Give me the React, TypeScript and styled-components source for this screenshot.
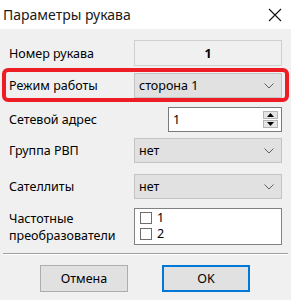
import React from 'react';
import styled, { createGlobalStyle } from 'styled-components';

const GlobalStyle = createGlobalStyle`
  html, body {
    margin: 0;
    padding: 0;
    background: #f0f0f0;
  }
  body {
    font-family: 'Noto Sans', 'Open Sans', sans-serif;
    color: #000;
  }
`;

const Window = styled.div`
  width: 291px;
  height: 300px;
  background: #f0f0f0;
  display: flex;
  flex-direction: column;
  overflow: hidden;
`;

const TitleBar = styled.div`
  height: 29px;
  background: #fff;
  display: flex;
  align-items: center;
  justify-content: space-between;
  padding: 0 9px 0 3px;
  font-size: 14px;
  color: #1a1a1a;
`;

const Body = styled.div`
  display: flex;
  flex-direction: column;
  padding: 11px 9px 0 9px;
`;

const Row = styled.div<{ $h: number; $mt: number }>`
  display: grid;
  grid-template-columns: 125px 1fr;
  align-items: center;
  height: ${(p) => p.$h}px;
  margin-top: ${(p) => p.$mt}px;
  position: relative;
`;

const Highlight = styled(Row)`
  &::before {
    content: '';
    position: absolute;
    left: -7px;
    right: -7px;
    top: -5px;
    bottom: -4px;
    border: 4px solid #ee1c25;
    border-radius: 6px;
    pointer-events: none;
  }
`;

const Label = styled.div`
  font-size: 12.5px;
  line-height: 17px;
`;

const ReadOnly = styled.div`
  height: 100%;
  box-sizing: border-box;
  border: 1px solid #d0d0d0;
  background: #f0f0f0;
  display: flex;
  align-items: center;
  justify-content: center;
  font-size: 12.5px;
  font-weight: bold;
`;

const Select = styled.div`
  height: 100%;
  box-sizing: border-box;
  border: 1px solid #c4c4c4;
  background: #e1e1e1;
  display: flex;
  align-items: center;
  justify-content: space-between;
  padding: 0 7px 0 4px;
  font-size: 12.5px;
`;

const Spin = styled.div`
  height: 100%;
  margin-left: 34px;
  box-sizing: border-box;
  border: 1px solid #7a7a7a;
  background: #fff;
  display: flex;
  align-items: center;
  justify-content: space-between;
  padding: 0 3px 0 4px;
  font-size: 12.5px;
`;

const SpinButtons = styled.div`
  display: flex;
  flex-direction: column;
  gap: 1px;
`;

const SpinButton = styled.div`
  width: 15px;
  height: 8px;
  background: #e5e5e5;
  border: 1px solid #b5b5b5;
  box-sizing: border-box;
  display: flex;
  align-items: center;
  justify-content: center;
`;

const ListBox = styled.div`
  height: 100%;
  box-sizing: border-box;
  border: 1px solid #828282;
  background: #fff;
  padding: 3px 0 0 5px;
  display: flex;
  flex-direction: column;
  gap: 4px;
`;

const CheckRow = styled.div`
  display: flex;
  align-items: center;
  gap: 5px;
  font-size: 12.5px;
  line-height: 12px;
`;

const CheckBox = styled.span`
  width: 12px;
  height: 12px;
  box-sizing: border-box;
  border: 1px solid #6d6d6d;
  background: #fff;
`;

const Separator = styled.div`
  margin: 8px 3px 0 3px;
  height: 1px;
  background: #a0a0a0;
  box-shadow: 0 1px 0 #fff;
`;

const Buttons = styled.div`
  display: flex;
  gap: 34px;
  padding: 11px 0 0 40px;
`;

const Button = styled.div<{ $primary?: boolean }>`
  width: 88px;
  height: 27px;
  box-sizing: border-box;
  border: ${(p) => (p.$primary ? '2px solid #0078d7' : '1px solid #adadad')};
  background: #e1e1e1;
  display: flex;
  align-items: center;
  justify-content: center;
  font-size: 12.5px;
`;

const Chevron = () => (
  <svg width="10" height="6" viewBox="0 0 10 6">
    <path d="M0.5 0.5 L5 5 L9.5 0.5" fill="none" stroke="#606060" strokeWidth="1" />
  </svg>
);

const Close = () => (
  <svg width="14" height="14" viewBox="0 0 14 14">
    <path d="M1 1 L13 13 M13 1 L1 13" stroke="#111" strokeWidth="1.1" />
  </svg>
);

const Arrow = ({ up }: { up?: boolean }) => (
  <svg width="7" height="4" viewBox="0 0 7 4">
    <path d={up ? 'M0 4 L3.5 0 L7 4 Z' : 'M0 0 L3.5 4 L7 0 Z'} fill="#000" />
  </svg>
);

export default function App() {
  return (
    <>
      <GlobalStyle />
      <Window>
        <TitleBar>
          <span>Параметры рукава</span>
          <Close />
        </TitleBar>
        <Body>
          <Row $h={26} $mt={0}>
            <Label>Номер рукава</Label>
            <ReadOnly>1</ReadOnly>
          </Row>
          <Highlight $h={25} $mt={7}>
            <Label>Режим работы</Label>
            <Select>
              <span>сторона 1</span>
              <Chevron />
            </Select>
          </Highlight>
          <Row $h={25} $mt={9}>
            <Label>Сетевой адрес</Label>
            <Spin>
              <span>1</span>
              <SpinButtons>
                <SpinButton><Arrow up /></SpinButton>
                <SpinButton><Arrow /></SpinButton>
              </SpinButtons>
            </Spin>
          </Row>
          <Row $h={25} $mt={6}>
            <Label>Группа РВП</Label>
            <Select>
              <span>нет</span>
              <Chevron />
            </Select>
          </Row>
          <Row $h={25} $mt={11}>
            <Label>Сателлиты</Label>
            <Select>
              <span>нет</span>
              <Chevron />
            </Select>
          </Row>
          <Row $h={37} $mt={9}>
            <Label>Частотные<br />преобразователи</Label>
            <ListBox>
              <CheckRow><CheckBox />1</CheckRow>
              <CheckRow><CheckBox />2</CheckRow>
            </ListBox>
          </Row>
        </Body>
        <Separator />
        <Buttons>
          <Button>Отмена</Button>
          <Button $primary>OK</Button>
        </Buttons>
      </Window>
    </>
  );
}
